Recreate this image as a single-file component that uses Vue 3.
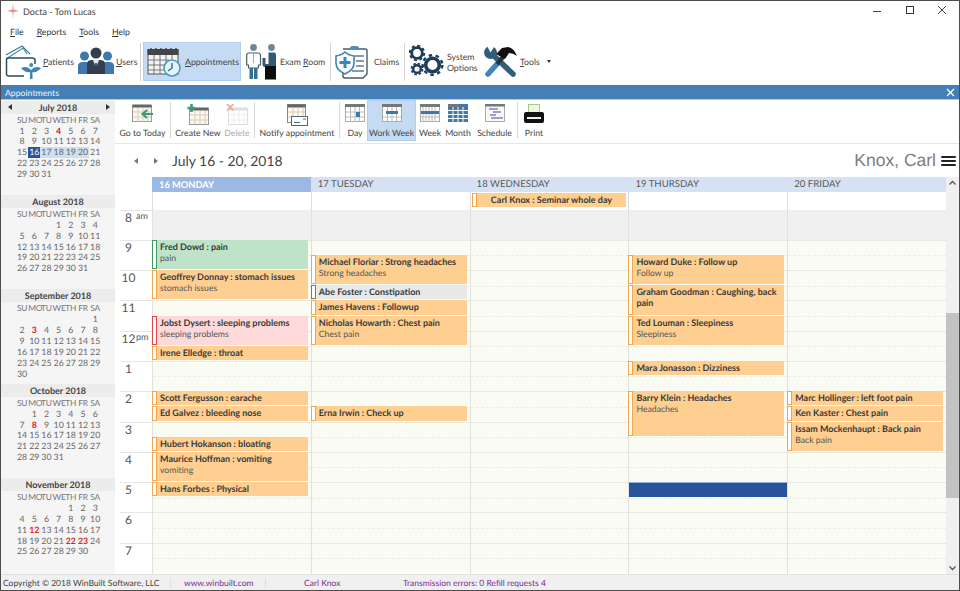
<template>
  <div class="app">
    <!-- title bar -->
    <div class="titlebar">
      <svg class="logo" width="14" height="16" viewBox="0 0 14 16">
        <path d="M7 0 L7.600 6.500 L13 8 L7.600 9 L7 16 L6.400 9 L1 8 L6.400 6.500 Z" fill="#e58b8f" />
      </svg>
      <span class="titlebar__text">Docta - Tom Lucas</span>
      <div class="winbtns">
        <svg width="12" height="12" viewBox="0 0 12 12"><path d="M0 6.500H8" stroke="#444" /></svg>
        <svg width="12" height="12" viewBox="0 0 12 12"><rect x="1.500" y="1.500" width="7" height="7" fill="none" stroke="#333" /></svg>
        <svg width="12" height="12" viewBox="0 0 12 12"><path d="M1 1L9 9M9 1L1 9" stroke="#444" /></svg>
      </div>
    </div>

    <!-- menu -->
    <div class="menubar">
      <span v-for="m in menus" :key="m" class="menubar__item"><u>{{ m[0] }}</u>{{ m.slice(1) }}</span>
    </div>

    <!-- main toolbar -->
    <div class="toolbar">
      <div class="tool tool--patients">
        <svg width="36" height="34" viewBox="0 0 36 34">
          <path d="M1 14 L18 3 L22 9" fill="none" stroke="#4b8cae" stroke-width="1.200" />
          <path d="M1 10 L17 1 L25 9" fill="none" stroke="#3a7a9c" stroke-width="1.100" />
          <path d="M1.500 15 V29 Q1.500 31 4 31 H19 M30 19 V15 Q30 13 27 13 H3 Q1.500 13 1.500 15" fill="none" stroke="#2c4a62" stroke-width="1.500" />
          <path d="M16 23 Q22 20 26 25 Q30 20 36 23 Q32 28 27.500 27 L27.500 34 H25 L25 27 Q20 28 16 23 Z" fill="#3d86b4" />
          <circle cx="26.200" cy="20" r="2" fill="#3d86b4" />
        </svg>
        <span class="tool__label"><u>P</u>atients</span>
      </div>
      <div class="tool tool--users">
        <svg width="36" height="30" viewBox="0 0 36 30">
          <circle cx="6.500" cy="9" r="4.500" fill="#3f78ae" />
          <circle cx="29.500" cy="9" r="4.500" fill="#3f78ae" />
          <path d="M0 27 V19 Q0 15 5 15 H9 L12 18 V27 Z" fill="#3f78ae" />
          <path d="M36 27 V19 Q36 15 31 15 H27 L24 18 V27 Z" fill="#3f78ae" />
          <circle cx="18" cy="6" r="5.500" fill="#333f4f" />
          <path d="M9 27 V17 Q9 13 14 13 H22 Q27 13 27 17 V27 Z" fill="#333f4f" />
          <path d="M15 13 L18 21 L21 13 Z" fill="#dfe6ee" />
          <path d="M17.200 16 H18.800 L19.200 24 L18 26 L16.800 24 Z" fill="#333f4f" />
        </svg>
        <span class="tool__label"><u>U</u>sers</span>
      </div>
      <div class="tool-sep"></div>
      <div class="tool tool--active">
        <svg width="35" height="30" viewBox="0 0 35 30">
          <rect x="1" y="3" width="30" height="24" fill="#f4f4f4" stroke="#555" />
          <rect x="0.500" y="2" width="31" height="6" fill="#444" />
          <path d="M4 1V4M9 1V4M14 1V4M19 1V4M24 1V4M29 1V4" stroke="#444" stroke-width="1.400" />
          <path d="M1 13H22M1 18H20M1 23H20M7 8V27M13 8V27M19 8V27M25 8V14" stroke="#777" />
          <circle cx="25" cy="21" r="8" fill="#e8f2f8" stroke="#4a9bc6" stroke-width="1.600" />
          <path d="M25 16V21L21 24" fill="none" stroke="#2d6f96" stroke-width="1.400" />
        </svg>
        <span class="tool__label"><u>A</u>ppointments</span>
      </div>
      <div class="tool tool--exam">
        <svg width="31" height="36" viewBox="0 0 31 36">
          <circle cx="7.500" cy="3.500" r="3.400" fill="#6d8796" />
          <path d="M2.500 9 H12.500 Q14.500 9 14.500 12 V21 H12.500 V24 H2.500 V21 H0.700 V12 Q0.700 9 2.500 9 Z" fill="#fff" stroke="#4a5c68" stroke-width="1.200" />
          <path d="M7.500 9 V19" stroke="#9aa9b2" />
          <path d="M3.500 24 H7 V35 H3.500 Z M8 24 H11.500 V35 H8 Z" fill="#36708f" />
          <circle cx="25.500" cy="3.500" r="3.400" fill="#6d8796" />
          <path d="M22.500 8.500 H28.500 Q30 8.500 30 11 V23 H19 Q16.500 23 16.500 20 V14 H19.500 V20 H22.500 Z" fill="#36586e" />
          <rect x="19" y="22" width="11" height="13.500" fill="#0c0c0c" />
        </svg>
        <span class="tool__label">Exam <u>R</u>oom</span>
      </div>
      <div class="tool-sep"></div>
      <div class="tool tool--claims">
        <svg width="36" height="36" viewBox="0 0 36 36">
          <path d="M8 5 H30 Q32 5 32 7 V30 L28 34 H10 Q8 34 8 32 V27" fill="#fff" stroke="#445a6b" stroke-width="1.400" />
          <path d="M15 4 Q15 2 18 2 H21 Q24 2 24 4 V6 H15 Z" fill="#4a8dbb" />
          <path d="M20 12H29M21 17H29M21 22H29M17 27H29" stroke="#667a88" stroke-width="1.600" />
          <path d="M1 12 Q7 11 10 8 Q13 11 19 12 V19 Q19 26 10 30 Q1 26 1 19 Z" fill="#fff" stroke="#3a85ba" stroke-width="1.600" />
          <path d="M10 13V24M4.500 18.500H15.500" stroke="#3a85ba" stroke-width="3" />
        </svg>
        <span class="tool__label">Claims</span>
      </div>
      <div class="tool-sep"></div>
      <div class="tool tool--system">
        <svg width="36" height="36" viewBox="0 0 36 36">
          <g fill="none" stroke="#1c3d5c">
            <circle cx="8" cy="9" r="5.300" stroke-width="2.800" />
            <circle cx="8" cy="9" r="7.200" stroke-width="2" stroke-dasharray="3 2.650" />
            <circle cx="8" cy="25" r="3.800" stroke-width="2.400" />
            <circle cx="8" cy="25" r="5.500" stroke-width="1.800" stroke-dasharray="2.400 1.920" />
            <circle cx="23.500" cy="21" r="6.800" stroke-width="3.600" />
            <circle cx="23.500" cy="21" r="9.800" stroke-width="2.400" stroke-dasharray="3.500 3.500" />
          </g>
        </svg>
        <span class="tool__label tool__label--two">System<br />Options</span>
      </div>
      <div class="tool tool--tools">
        <svg width="33" height="33" viewBox="0 0 33 33">
          <path d="M10 11 L29 29" stroke="#2f5f7a" stroke-width="5.500" stroke-linecap="round" />
          <circle cx="6.500" cy="7.500" r="6.500" fill="#2f5f7a" />
          <path d="M6.500 7.500 L2 -1 L12 -1 Z" fill="#fff" />
          <path d="M4 29 L14 18" stroke="#3f86bc" stroke-width="5.500" stroke-linecap="round" />
          <path d="M13 19 L19 12" stroke="#26323c" stroke-width="4.500" />
          <path d="M12 9 L18 3 L24 2 Q30 3 33 11 Q29 8 25 8 L21 14 Z" fill="#111" />
        </svg>
        <span class="tool__label"><u>T</u>ools</span>
        <span class="caret"></span>
      </div>
    </div>

    <!-- blue module bar -->
    <div class="modulebar">
      <span>Appointments</span>
      <svg width="9" height="9" viewBox="0 0 9 9"><path d="M1 1L8 8M8 1L1 8" stroke="#fff" stroke-width="1.300" /></svg>
    </div>

    <div class="content">
      <!-- mini calendars -->
      <aside class="sidebar">
        <section v-for="(mon, mi) in months" :key="mon.name" class="mini">
          <div class="mini__head">
            <span v-if="mi === 0" class="tri tri--left"></span>
            <span class="mini__name">{{ mon.name }}</span>
            <span v-if="mi === 0" class="tri tri--right"></span>
          </div>
          <div class="mini__grid mini__grid--names">
            <span v-for="d in dayNames" :key="d">{{ d }}</span>
          </div>
          <div class="mini__grid">
            <span v-for="n in mon.offset" :key="'b' + n"></span>
            <span
              v-for="n in mon.days"
              :key="n"
              :class="{
                red: mon.red.includes(n),
                today: mi === 0 && n === 16,
                picked: mi === 0 && n > 16 && n < 21,
              }"
            >{{ n }}</span>
          </div>
        </section>
      </aside>

      <main class="main">
        <!-- ribbon -->
        <div class="ribbon">
          <div class="rb rb--today">
            <svg width="22" height="19" viewBox="0 0 22 19">
              <rect x="0.500" y="1.500" width="19" height="16" fill="#faf7ef" stroke="#999" />
              <rect x="0.500" y="0.500" width="19" height="3" fill="#666" />
              <path d="M1 8H19M1 13H19M6 4V18M11 4V18M16 4V18" stroke="#d9cdb6" />
              <path d="M21 10H11M15 6L10.500 10L15 14" fill="none" stroke="#3a9a7c" stroke-width="2.200" />
            </svg>
            <span>Go to Today</span>
          </div>
          <div class="rb-sep"></div>
          <div class="rb rb--new">
            <svg width="22" height="21" viewBox="0 0 22 21">
              <rect x="2.500" y="4.500" width="19" height="16" fill="#faf7ef" stroke="#999" />
              <rect x="2.500" y="3.500" width="19" height="3" fill="#666" />
              <path d="M3 11H21M3 16H21M8 7V20M13 7V20M18 7V20" stroke="#d9cdb6" />
              <path d="M4.500 0V8M0.500 4H8.500" stroke="#3f9a7e" stroke-width="2.600" />
            </svg>
            <span>Create New</span>
          </div>
          <div class="rb rb--delete">
            <svg width="22" height="21" viewBox="0 0 22 21">
              <rect x="2.500" y="4.500" width="19" height="16" fill="#fff" stroke="#ddd" />
              <rect x="2.500" y="3.500" width="19" height="3" fill="#ddd" />
              <path d="M3 11H21M3 16H21M8 7V20M13 7V20M18 7V20" stroke="#eee" />
              <path d="M1 0L7.500 6.500M7.500 0L1 6.500" stroke="#eeb0ac" stroke-width="1.800" />
            </svg>
            <span>Delete</span>
          </div>
          <div class="rb-sep"></div>
          <div class="rb rb--notify">
            <svg width="22" height="22" viewBox="0 0 22 22">
              <rect x="1.500" y="0.500" width="18" height="18" fill="#fdfbf5" stroke="#888" />
              <rect x="1.500" y="0.500" width="18" height="3" fill="#666" />
              <path d="M2 8H19M2 13H19M7 4V18M12 4V18M17 4V12" stroke="#d8c9a8" />
              <rect x="5.500" y="12.500" width="16" height="9" fill="#fff" stroke="#4a6a85" />
              <path d="M8 18.500H14M17 15H20" stroke="#4a6a85" />
            </svg>
            <span>Notify appointment</span>
          </div>
          <div class="rb-sep"></div>
          <div class="rb rb--day">
            <svg width="20" height="18" viewBox="0 0 20 18">
              <rect x="0.500" y="0.500" width="19" height="17" fill="#fff" stroke="#aaa" />
              <rect x="0" y="0" width="20" height="3" fill="#777" />
              <path d="M1 8H19M1 13H19M5.500 3V18M10 3V18M14.500 3V18" stroke="#bbb" />
              <rect x="11" y="8" width="4" height="5" fill="#3f78ae" />
            </svg>
            <span>Day</span>
          </div>
          <div class="rb rb--work">
            <svg width="20" height="18" viewBox="0 0 20 18">
              <rect x="0.500" y="0.500" width="19" height="17" fill="#fff" stroke="#aaa" />
              <rect x="0" y="0" width="20" height="3" fill="#777" />
              <path d="M1 13H19M5.500 3V18M10 3V18M14.500 3V18" stroke="#bbb" />
              <rect x="4" y="7" width="12" height="3" fill="#3f78ae" />
            </svg>
            <span>Work Week</span>
          </div>
          <div class="rb rb--week">
            <svg width="20" height="18" viewBox="0 0 20 18">
              <rect x="0.500" y="0.500" width="19" height="17" fill="#fff" stroke="#aaa" />
              <rect x="0" y="0" width="20" height="3" fill="#777" />
              <path d="M1 13H19M3 3V18M6 3V18M9 3V18M12 3V18M15 3V18" stroke="#bbb" />
              <rect x="1" y="7" width="18" height="3" fill="#3f78ae" />
            </svg>
            <span>Week</span>
          </div>
          <div class="rb rb--month">
            <svg width="20" height="18" viewBox="0 0 20 18">
              <rect x="0" y="0" width="20" height="18" fill="#3f78ae" />
              <path d="M0 6.500H20M0 10.500H20M0 14.500H20M5 3V18M10 3V18M15 3V18" stroke="#fff" />
              <rect x="0" y="0" width="11" height="3" fill="#777" />
            </svg>
            <span>Month</span>
          </div>
          <div class="rb rb--schedule">
            <svg width="20" height="18" viewBox="0 0 20 18">
              <rect x="0.500" y="0.500" width="19" height="17" fill="#f8f8f8" stroke="#aaa" />
              <rect x="0" y="0" width="20" height="2.500" fill="#777" />
              <path d="M4 5H13M8 8H16M5 11H11M6 14H18" stroke="#8a7fc0" stroke-width="1.300" />
            </svg>
            <span>Schedule</span>
          </div>
          <div class="rb-sep"></div>
          <div class="rb rb--print">
            <svg width="20" height="20" viewBox="0 0 20 20">
              <rect x="4.500" y="0.500" width="11" height="8" fill="#eef6dc" stroke="#a8c88a" />
              <path d="M0 10 Q0 8 2 8 H18 Q20 8 20 10 V17 Q20 19 18 19 H2 Q0 19 0 17 Z" fill="#111" />
              <rect x="3" y="13" width="14" height="2" fill="#eee" />
            </svg>
            <span>Print</span>
          </div>
        </div>

        <!-- date row -->
        <div class="daterow">
          <span class="tri tri--left tri--grey"></span>
          <span class="tri tri--right tri--grey"></span>
          <span class="daterow__range">July 16 - 20, 2018</span>
          <span class="daterow__who">Knox, Carl</span>
          <span class="burger"><i></i><i></i><i></i></span>
        </div>

        <!-- calendar -->
        <div class="cal">
          <div class="cal__left">
            <div class="dayheads">
              <div v-for="(d, i) in days" :key="d.label" class="dayhead" :class="{ 'dayhead--on': i === 0 }">{{ d.label }}</div>
            </div>
            <div class="allday">
              <div v-for="d in days" :key="d.label" class="allday__cell">
                <div v-if="d.allDay" class="ev ev--allday">
                  <div class="ev__strip"></div>
                  <div class="ev__body"><b>{{ d.allDay }}</b></div>
                </div>
              </div>
            </div>
            <div class="gridwrap">
              <div class="times">
                <div v-for="h in hours" :key="h.n" class="times__row">
                  <span class="times__num">{{ h.n }}</span>
                  <span v-if="h.s" class="times__sfx">{{ h.s }}</span>
                </div>
              </div>
              <div class="columns">
                <div v-for="d in days" :key="d.label" class="column">
                  <div v-for="h in hours" :key="h.n" class="slot" :class="{ 'slot--off': h.n === 8 }"><div class="slot__half"></div></div>
                  <div v-if="d.block" class="block" :style="eventPos(d.block)"></div>
                  <div
                    v-for="ev in d.events"
                    :key="ev.title"
                    class="ev"
                    :class="ev.kind && 'ev--' + ev.kind"
                    :style="eventPos(ev)"
                  >
                    <div class="ev__strip"></div>
                    <div class="ev__body">
                      <b>{{ ev.title }}</b>
                      <span v-if="ev.note">{{ ev.note }}</span>
                    </div>
                  </div>
                </div>
              </div>
            </div>
          </div>
          <div class="scroll">
            <svg width="13" height="12" viewBox="0 0 13 12"><path d="M3.500 7.500L6.500 4.500L9.500 7.500" fill="none" stroke="#555" stroke-width="1.300" /></svg>
            <div class="scroll__track"><div class="scroll__thumb"></div></div>
            <svg width="13" height="12" viewBox="0 0 13 12"><path d="M3.500 4.500L6.500 7.500L9.500 4.500" fill="none" stroke="#555" stroke-width="1.300" /></svg>
          </div>
        </div>
      </main>
    </div>

    <!-- status bar -->
    <div class="status">
      <span class="status__copy">Copyright © 2018 WinBuilt Software, LLC</span>
      <span class="status__link">www.winbuilt.com</span>
      <span class="status__user">Carl Knox</span>
      <span class="status__errs">Transmission errors: 0 Refill requests 4</span>
    </div>
  </div>
</template>

<script setup>
const HOUR = 30.3;

const menus = ["File", "Reports", "Tools", "Help"];
const dayNames = ["SU", "MO", "TU", "WE", "TH", "FR", "SA"];

const months = [
  { name: "July 2018", offset: 0, days: 31, red: [4] },
  { name: "August 2018", offset: 3, days: 31, red: [] },
  { name: "September 2018", offset: 6, days: 30, red: [3] },
  { name: "October 2018", offset: 1, days: 31, red: [8] },
  { name: "November 2018", offset: 4, days: 30, red: [12, 22, 23] },
];

const hours = [
  { n: 8, s: "am" }, { n: 9 }, { n: 10 }, { n: 11 }, { n: 12, s: "pm" }, { n: 1 },
  { n: 2 }, { n: 3 }, { n: 4 }, { n: 5 }, { n: 6 }, { n: 7 },
];

// start is hours after 8am, len is in hours
const days = [
  {
    label: "16 MONDAY",
    events: [
      { start: 1, len: 1, title: "Fred Dowd : pain", note: "pain", kind: "green" },
      { start: 2, len: 1, title: "Geoffrey Donnay : stomach issues", note: "stomach issues" },
      { start: 3.5, len: 1, title: "Jobst Dysert : sleeping problems", note: "sleeping problems", kind: "pink" },
      { start: 4.5, len: 0.5, title: "Irene Elledge : throat" },
      { start: 6, len: 0.5, title: "Scott Fergusson : earache" },
      { start: 6.5, len: 0.5, title: "Ed Galvez : bleeding nose" },
      { start: 7.5, len: 0.5, title: "Hubert Hokanson : bloating" },
      { start: 8, len: 1, title: "Maurice Hoffman : vomiting", note: "vomiting" },
      { start: 9, len: 0.5, title: "Hans Forbes : Physical" },
    ],
  },
  {
    label: "17 TUESDAY",
    events: [
      { start: 1.5, len: 1, title: "Michael Floriar : Strong headaches", note: "Strong headaches" },
      { start: 2.5, len: 0.5, title: "Abe Foster : Constipation", kind: "grey" },
      { start: 3, len: 0.5, title: "James Havens : Followup" },
      { start: 3.5, len: 1, title: "Nicholas Howarth : Chest pain", note: "Chest pain" },
      { start: 6.5, len: 0.5, title: "Erna Irwin : Check up" },
    ],
  },
  { label: "18 WEDNESDAY", allDay: "Carl Knox : Seminar whole day", events: [] },
  {
    label: "19 THURSDAY",
    block: { start: 9, len: 0.5 },
    events: [
      { start: 1.5, len: 1, title: "Howard Duke : Follow up", note: "Follow up" },
      { start: 2.5, len: 1, title: "Graham Goodman : Caughing, back pain" },
      { start: 3.5, len: 1, title: "Ted Louman : Sleepiness", note: "Sleepiness" },
      { start: 5, len: 0.5, title: "Mara Jonasson : Dizziness" },
      { start: 6, len: 1.5, title: "Barry Klein : Headaches", note: "Headaches" },
    ],
  },
  {
    label: "20 FRIDAY",
    events: [
      { start: 6, len: 0.5, title: "Marc Hollinger : left foot pain" },
      { start: 6.5, len: 0.5, title: "Ken Kaster : Chest pain" },
      { start: 7, len: 1, title: "Issam Mockenhaupt : Back pain", note: "Back pain" },
    ],
  },
];

function eventPos(ev) {
  return { top: `${ev.start * HOUR}px`, height: `${ev.len * HOUR}px` };
}
</script>

<style>
html,
body {
  margin: 0;
  overflow: hidden;
  background: #fff;
}
</style>

<style scoped>
.app {
  box-sizing: border-box;
  width: 960px;
  height: 591px;
  border: 1px solid #4d4d4d;
  display: flex;
  flex-direction: column;
  overflow: hidden;
  background: #fff;
  font-family: Lato, "Open Sans", sans-serif;
  font-size: 8.7px;
  color: #444;
  text-rendering: geometricPrecision;
}

/* title + menu */
.titlebar {
  height: 20px;
  flex: none;
  display: flex;
  align-items: center;
  padding-left: 5px;
}
.logo {
  margin-right: 3px;
}
.titlebar__text {
  font-size: 9px;
  color: #444;
}
.winbtns {
  margin-left: auto;
  display: flex;
  gap: 20px;
  padding-right: 10px;
}
.menubar {
  height: 20px;
  flex: none;
  display: flex;
  align-items: center;
  padding: 1px 0 0 9px;
  box-sizing: border-box;
  gap: 13px;
  color: #333;
}

/* main toolbar */
.toolbar {
  height: 44px;
  flex: none;
  box-sizing: border-box;
  display: flex;
  align-items: center;
  padding: 0 0 3px 4px;
}
.tool {
  display: flex;
  align-items: center;
  flex: none;
  height: 39px;
  gap: 2px;
  box-sizing: border-box;
}
.tool__label {
  color: #444;
  white-space: nowrap;
}
.tool__label--two {
  line-height: 11px;
}
.tool--patients {
  width: 73px;
}
.tool--users {
  width: 62px;
}
.tool-sep {
  width: 1px;
  height: 38px;
  flex: none;
  background: #d4d4d4;
}
.tool--active {
  width: 98px;
  margin-left: 2px;
  padding-left: 3px;
  gap: 3px;
  background: #c4dbf3;
  border: 1px solid #b0cfee;
}
.tool--exam {
  width: 84px;
  margin-left: 5px;
  gap: 3px;
}
.tool--claims {
  width: 69px;
  margin-left: 4px;
  gap: 3px;
}
.tool--system {
  width: 75px;
  margin-left: 4px;
}
.tool--tools {
  gap: 3px;
}
.caret {
  width: 0;
  height: 0;
  margin-left: 4px;
  border-left: 2px solid transparent;
  border-right: 2px solid transparent;
  border-top: 3px solid #333;
}

.modulebar {
  height: 15px;
  flex: none;
  box-sizing: border-box;
  background: #4480b6;
  border-bottom: 1px solid #a9cbe6;
  color: #eef4fa;
  display: flex;
  align-items: center;
  justify-content: space-between;
  padding: 0 4px;
}

.content {
  flex: 1;
  min-height: 0;
  display: flex;
}

/* sidebar */
.sidebar {
  width: 114px;
  flex: none;
  background: #f5f5f5;
  overflow: hidden;
}
.mini {
  height: 94.4px;
  padding-top: 0.5px;
  box-sizing: border-box;
}
.mini__head {
  height: 13px;
  background: #ececec;
  display: flex;
  align-items: center;
  justify-content: center;
  position: relative;
  font-size: 9px;
  font-weight: 700;
  color: #444;
}
.mini__head .tri {
  position: absolute;
}
.mini__head .tri--left {
  left: 7px;
}
.mini__head .tri--right {
  right: 5px;
}
.mini__grid {
  display: grid;
  grid-template-columns: repeat(7, 12.2px);
  grid-auto-rows: 10.85px;
  padding-left: 15px;
  font-size: 8.8px;
  line-height: 10.85px;
  text-align: center;
  color: #666;
}
.mini__grid--names {
  grid-auto-rows: 12px;
  line-height: 12px;
  font-size: 8.4px;
  color: #777;
  letter-spacing: -0.2px;
}
.red {
  color: #e0242a;
  font-weight: 700;
}
.today {
  background: #27549a;
  color: #fff;
}
.picked {
  background: #cddff3;
}

.tri {
  display: inline-block;
  width: 0;
  height: 0;
  border-top: 3.5px solid transparent;
  border-bottom: 3.5px solid transparent;
}
.tri--left {
  border-right: 4px solid #333;
}
.tri--right {
  border-left: 4px solid #333;
}
.tri--grey.tri--left {
  border-right-color: #777;
}
.tri--grey.tri--right {
  border-left-color: #777;
}

/* main column */
.main {
  flex: 1;
  min-width: 0;
  display: flex;
  flex-direction: column;
}
.ribbon {
  height: 44px;
  flex: none;
  box-sizing: border-box;
  border-bottom: 1px solid #e6e6e6;
  display: flex;
  padding-left: 4px;
  padding-bottom: 2px;
}
.rb {
  display: flex;
  flex-direction: column;
  align-items: center;
  justify-content: space-between;
  padding: 4px 0 3px;
  color: #444;
  white-space: nowrap;
  box-sizing: border-box;
}
.rb svg {
  flex: none;
}
.rb--today {
  width: 47px;
}
.rb--new {
  width: 46px;
  margin-left: 4px;
}
.rb--delete {
  width: 26px;
  margin-left: 3px;
  color: #aaa;
}
.rb--notify {
  width: 76px;
  margin-left: 4px;
}
.rb--day {
  width: 18px;
  margin-left: 6px;
}
.rb--work {
  width: 49px;
  margin-left: 3px;
  background: #c4dbf3;
  border: 1px solid #b0cfee;
  padding: 3px 0 2px;
}
.rb--week {
  width: 24px;
  margin-left: 2px;
}
.rb--month {
  width: 28px;
  margin-left: 2px;
}
.rb--schedule {
  width: 37px;
  margin-left: 4px;
}
.rb--print {
  width: 20px;
  margin-left: 6px;
}
.rb-sep {
  width: 1px;
  background: #d8d8d8;
  margin: 2px 0 3px 4px;
}

.daterow {
  height: 33px;
  flex: none;
  display: flex;
  align-items: center;
  padding-left: 19px;
  padding-right: 3px;
}
.daterow .tri--right {
  margin-left: 16px;
}
.daterow__range {
  margin-left: 14px;
  font-size: 13.9px;
  color: #444;
}
.daterow__who {
  margin-left: auto;
  font-family: "Liberation Sans", sans-serif;
  font-size: 17.5px;
  color: #7d7d7d;
}
.burger {
  display: flex;
  flex-direction: column;
  gap: 2px;
  margin-left: 5px;
  width: 15px;
}
.burger i {
  height: 2px;
  background: #222;
  border-radius: 1px;
}

/* calendar */
.cal {
  flex: 1;
  min-height: 0;
  display: flex;
}
.cal__left {
  flex: 1;
  min-width: 0;
  display: flex;
  flex-direction: column;
}
.dayheads {
  height: 15px;
  flex: none;
  margin-left: 37px;
  display: flex;
  background: #d6e2f3;
}
.dayhead {
  flex: 1;
  padding-left: 7px;
  line-height: 15px;
  font-size: 9.6px;
  color: #5a5a5a;
}
.dayhead--on {
  background: #9cb9e3;
  color: #fff;
  font-size: 9.3px;
  font-weight: 700;
}
.allday {
  height: 17.5px;
  flex: none;
  margin-left: 37px;
  display: flex;
}
.allday__cell {
  flex: 1;
  border-left: 1px solid #ddd;
  position: relative;
}
.gridwrap {
  flex: 1;
  min-height: 0;
  display: flex;
  overflow: hidden;
}
.times {
  width: 37px;
  flex: none;
}
.times__row {
  height: 30.3px;
  box-sizing: border-box;
  border-top: 1px solid #e6e6e6;
  margin-left: 5px;
  display: flex;
  align-items: flex-start;
  position: relative;
}
.times__num {
  width: 17px;
  text-align: center;
  font-size: 12px;
  line-height: 13px;
  color: #555;
}
.times__sfx {
  position: absolute;
  left: 16px;
  top: 0;
  font-size: 9px;
  line-height: 9px;
  color: #555;
}
.columns {
  flex: 1;
  min-width: 0;
  display: flex;
}
.column {
  flex: 1;
  position: relative;
  border-left: 1px solid #e0e2dc;
}
.slot {
  height: 30.3px;
  box-sizing: border-box;
  background: #fafcf3;
  border-top: 1px solid #e6e9df;
}
.slot--off {
  background: #f0f0f0;
  border-top-color: #ececec;
}
.slot__half {
  height: 14.5px;
  border-bottom: 1px dashed #eceee5;
}
.slot--off .slot__half {
  border-bottom-color: transparent;
}
.block {
  position: absolute;
  left: 0;
  right: -1px;
  background: #27549a;
  border-top: 1px solid #8fb0de;
  box-sizing: border-box;
}

.ev {
  position: absolute;
  left: -1px;
  right: 3px;
  display: flex;
  box-sizing: border-box;
  padding-bottom: 1px;
  --ev-line: #f0a74f;
  --ev-fill: #fecf90;
}
.ev--green {
  --ev-line: #3f9a62;
  --ev-fill: #bfe3c8;
}
.ev--pink {
  --ev-line: #d9474a;
  --ev-fill: #fdd9d9;
}
.ev--grey {
  --ev-line: #777;
  --ev-fill: #e8e8e8;
}
.ev__strip {
  width: 5px;
  flex: none;
  box-sizing: border-box;
  background: #fff;
  border: 1px solid var(--ev-line);
}
.ev__body {
  flex: 1;
  min-width: 0;
  background: var(--ev-fill);
  padding: 1px 3px 0;
  line-height: 11px;
  color: #555;
  overflow: hidden;
}
.ev__body b {
  display: block;
  font-size: 9px;
  font-weight: 700;
  color: #3a3a3a;
}
.ev--allday {
  top: 1px;
  height: 15px;
  left: 1px;
  right: 2px;
}
.ev--allday .ev__body {
  text-align: center;
}

.scroll {
  width: 13px;
  flex: none;
  background: #f0f0f0;
  display: flex;
  flex-direction: column;
}
.scroll svg {
  flex: none;
}
.scroll__track {
  flex: 1;
  padding-top: 124px;
}
.scroll__thumb {
  height: 185px;
  background: #c2c2c2;
}

.status {
  height: 16px;
  flex: none;
  box-sizing: border-box;
  padding-top: 1px;
  background: #f0f0f0;
  border-top: 1px solid #e0e0e0;
  display: flex;
  align-items: center;
  font-size: 8.5px;
  color: #7a2d8f;
  white-space: nowrap;
}
.status__copy {
  width: 170px;
  padding-left: 2px;
  box-sizing: border-box;
  color: #444;
  border-right: 1px solid #e0e0e0;
}
.status__link {
  width: 95px;
  padding-left: 13px;
  box-sizing: border-box;
  border-right: 1px solid #e0e0e0;
}
.status__user {
  width: 137px;
  padding-left: 38px;
  box-sizing: border-box;
}
</style>
